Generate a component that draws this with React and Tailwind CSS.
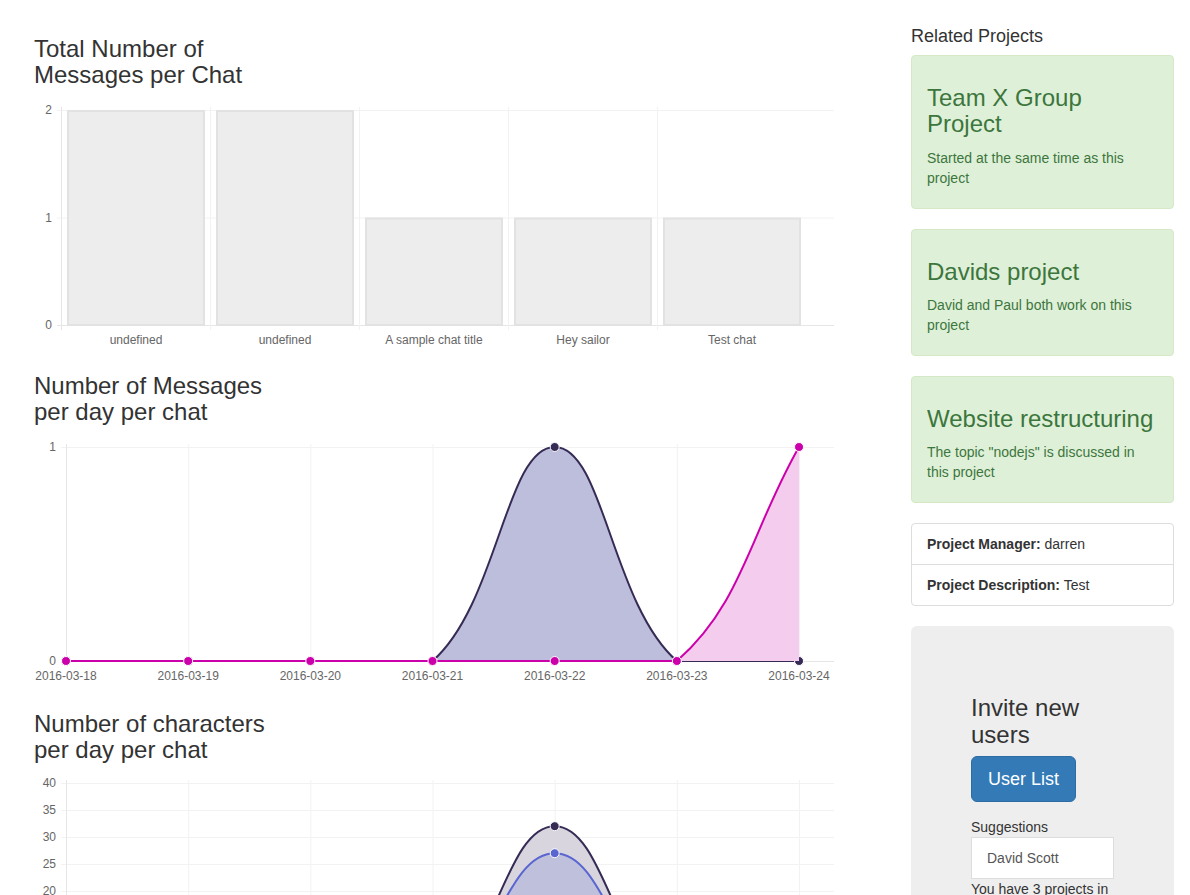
import React from 'react';

const FONT = "font-['Liberation_Sans',Arial,sans-serif]";

const barData = [
  { label: 'undefined', value: 2 },
  { label: 'undefined', value: 2 },
  { label: 'A sample chat title', value: 1 },
  { label: 'Hey sailor', value: 1 },
  { label: 'Test chat', value: 1 },
];

const dayLabels = ['2016-03-18', '2016-03-19', '2016-03-20', '2016-03-21', '2016-03-22', '2016-03-23', '2016-03-24'];
const xs = dayLabels.map((_, i) => 66 + i * 122.17);

// chart.js v1 style bezier with control points clamped to the plot area
const spline = (pts, top, bottom, t = 0.4) => {
  const clamp = (y) => Math.min(bottom, Math.max(top, y));
  const cps = pts.map((p, i) => {
    const a = pts[i - 1] || p;
    const b = pts[i + 1] || p;
    const d01 = Math.hypot(p.x - a.x, p.y - a.y);
    const d12 = Math.hypot(b.x - p.x, b.y - p.y);
    const s = d01 + d12 || 1;
    const fa = (t * d01) / s;
    const fb = (t * d12) / s;
    return {
      inner: { x: p.x - fa * (b.x - a.x), y: clamp(p.y - fa * (b.y - a.y)) },
      outer: { x: p.x + fb * (b.x - a.x), y: clamp(p.y + fb * (b.y - a.y)) },
    };
  });
  let d = `M${pts[0].x} ${pts[0].y}`;
  for (let i = 1; i < pts.length; i++) {
    d += ` C${cps[i - 1].outer.x} ${cps[i - 1].outer.y} ${cps[i].inner.x} ${cps[i].inner.y} ${pts[i].x} ${pts[i].y}`;
  }
  return d;
};

const BarChart = () => {
  const top = 110;
  const bottom = 325;
  const yOf = (v) => bottom - (v / 2) * (bottom - top);
  return (
    <svg width="800" height="264" viewBox="34 89 800 264" className={`block ${FONT}`}>
      {[0, 1, 2].map((v) => (
        <g key={v}>
          <line x1="57" x2="834" y1={yOf(v) + 0.5} y2={yOf(v) + 0.5} stroke={v === 0 ? '#e6e6e6' : '#f2f2f2'} />
          <text x="52" y={yOf(v) + 4} fontSize="12" fill="#666" textAnchor="end">{v}</text>
        </g>
      ))}
      {barData.map((b, i) => (
        <line key={i} x1={61.5 + i * 149} x2={61.5 + i * 149} y1="107" y2="330" stroke={i === 0 ? '#e6e6e6' : '#f2f2f2'} />
      ))}
      {barData.map((b, i) => (
        <g key={i}>
          <rect x={68 + i * 149} y={yOf(b.value) + 1} width="136" height={bottom - yOf(b.value) - 1} fill="#ededed" stroke="#e2e2e2" strokeWidth="2" />
          <text x={136 + i * 149} y="344" fontSize="12" fill="#666" textAnchor="middle">{b.label}</text>
        </g>
      ))}
    </svg>
  );
};

const LineChart = ({ top, height, yTop, yBot, yMax, yStep, datasets }) => {
  const yOf = (v) => yBot - (v / yMax) * (yBot - yTop);
  const ticks = [];
  for (let v = 0; v <= yMax; v += yStep) ticks.push(v);
  return (
    <svg width="800" height={height} viewBox={`34 ${top} 800 ${height}`} className={`block ${FONT}`}>
      {ticks.map((v) => (
        <g key={v}>
          <line x1="61" x2="834" y1={yOf(v) + 0.5} y2={yOf(v) + 0.5} stroke={v === 0 ? '#e6e6e6' : '#f2f2f2'} />
          <text x="56" y={yOf(v) + 4} fontSize="12" fill="#666" textAnchor="end">{v}</text>
        </g>
      ))}
      {xs.map((x, i) => (
        <g key={i}>
          <line x1={x + 0.5} x2={x + 0.5} y1={yTop - 3} y2={yBot + 5} stroke={i === 0 ? '#e6e6e6' : '#f2f2f2'} />
          <text x={x} y={yBot + 19} fontSize="12" fill="#666" textAnchor="middle">{dayLabels[i]}</text>
        </g>
      ))}
      {datasets.map((ds, k) => {
        const pts = ds.values.map((v, i) => ({ x: xs[i], y: yOf(v) }));
        const d = spline(pts, yTop, yBot);
        const last = pts[pts.length - 1];
        return (
          <g key={k}>
            <path d={`${d} L${last.x} ${yBot} L${pts[0].x} ${yBot} Z`} fill={ds.fill} />
            <path d={d} fill="none" stroke={ds.stroke} strokeWidth="2" />
            {pts.map((p, i) => (
              <circle key={i} cx={p.x} cy={p.y} r="4.5" fill={ds.stroke} stroke="#fff" strokeWidth="1" />
            ))}
          </g>
        );
      })}
    </svg>
  );
};

const Title = ({ children, first }) => (
  <h3 className={`w-[245px] text-[24px] leading-[1.1] text-[#333] ${first ? '' : 'mt-[20px]'}`}>{children}</h3>
);

const projects = [
  { title: 'Team X Group Project', text: 'Started at the same time as this project' },
  { title: 'Davids project', text: 'David and Paul both work on this project' },
  { title: 'Website restructuring', text: 'The topic "nodejs" is discussed in this project' },
];

export default function App() {
  return (
    <div className={`flex bg-white text-[#333] ${FONT}`}>
      <div className="ml-[34px] w-[800px] shrink-0 pt-[36px]">
        <Title first>Total Number of Messages per Chat</Title>
        <BarChart />
        <Title>Number of Messages per day per chat</Title>
        <LineChart
          top={426}
          height={265}
          yTop={447}
          yBot={661}
          yMax={1}
          yStep={1}
          datasets={[
            { values: [0, 0, 0, 0, 1, 0, 0], stroke: '#352b55', fill: '#bdbedb' },
            { values: [0, 0, 0, 0, 0, 0, 1], stroke: '#cc00aa', fill: '#f4ccee' },
          ]}
        />
        <Title>Number of characters per day per chat</Title>
        <LineChart
          top={764}
          height={265}
          yTop={784}
          yBot={1000}
          yMax={40}
          yStep={5}
          datasets={[
            { values: [0, 0, 0, 0, 32, 0, 0], stroke: '#352b55', fill: '#d9d5df' },
            { values: [0, 0, 0, 0, 27, 0, 0], stroke: '#5a66d0', fill: '#bfc0dc' },
            { values: [0, 0, 0, 0, 0, 0, 0], stroke: '#cc00aa', fill: '#f4ccee' },
          ]}
        />
      </div>

      <div className="ml-[77px] w-[263px] shrink-0 pt-[27px]">
        <h4 className="mb-[8px] text-[18px] leading-[1.1]">Related Projects</h4>
        {projects.map((p) => (
          <div key={p.title} className="mb-[20px] rounded-[4px] border border-[#d6e9c6] bg-[#dff0d8] px-[15px] pt-[29px] pb-[20px] text-[#3c763d]">
            <h3 className="mb-[10px] text-[24px] leading-[1.1]">{p.title}</h3>
            <p className="text-[14px] leading-[20px]">{p.text}</p>
          </div>
        ))}

        <div className="mb-[20px] rounded-[4px] border border-[#ddd] text-[14px] leading-[20px]">
          <div className="px-[15px] py-[10px]">
            <span className="font-bold">Project Manager:</span> darren
          </div>
          <div className="border-t border-[#ddd] px-[15px] py-[10px]">
            <span className="font-bold">Project Description:</span> Test
          </div>
        </div>

        <div className="rounded-[6px] bg-[#eeeeee] px-[60px] pt-[48px] pb-[48px]">
          <h3 className="mt-[21px] mb-[8px] text-[24px] leading-[1.1]">Invite new users</h3>
          <button className="rounded-[6px] border border-[#2e6da4] bg-[#337ab7] px-[16px] py-[10px] text-[18px] leading-[24px] text-white">
            User List
          </button>
          <div className="mt-[15px] text-[14px] leading-[20px]">Suggestions</div>
          <div className="border border-[#ddd] bg-white px-[15px] py-[10px] text-[14px] leading-[20px] text-[#555]">
            David Scott
          </div>
          <p className="text-[14px] leading-[20px]">You have 3 projects in common</p>
        </div>
      </div>
    </div>
  );
}
